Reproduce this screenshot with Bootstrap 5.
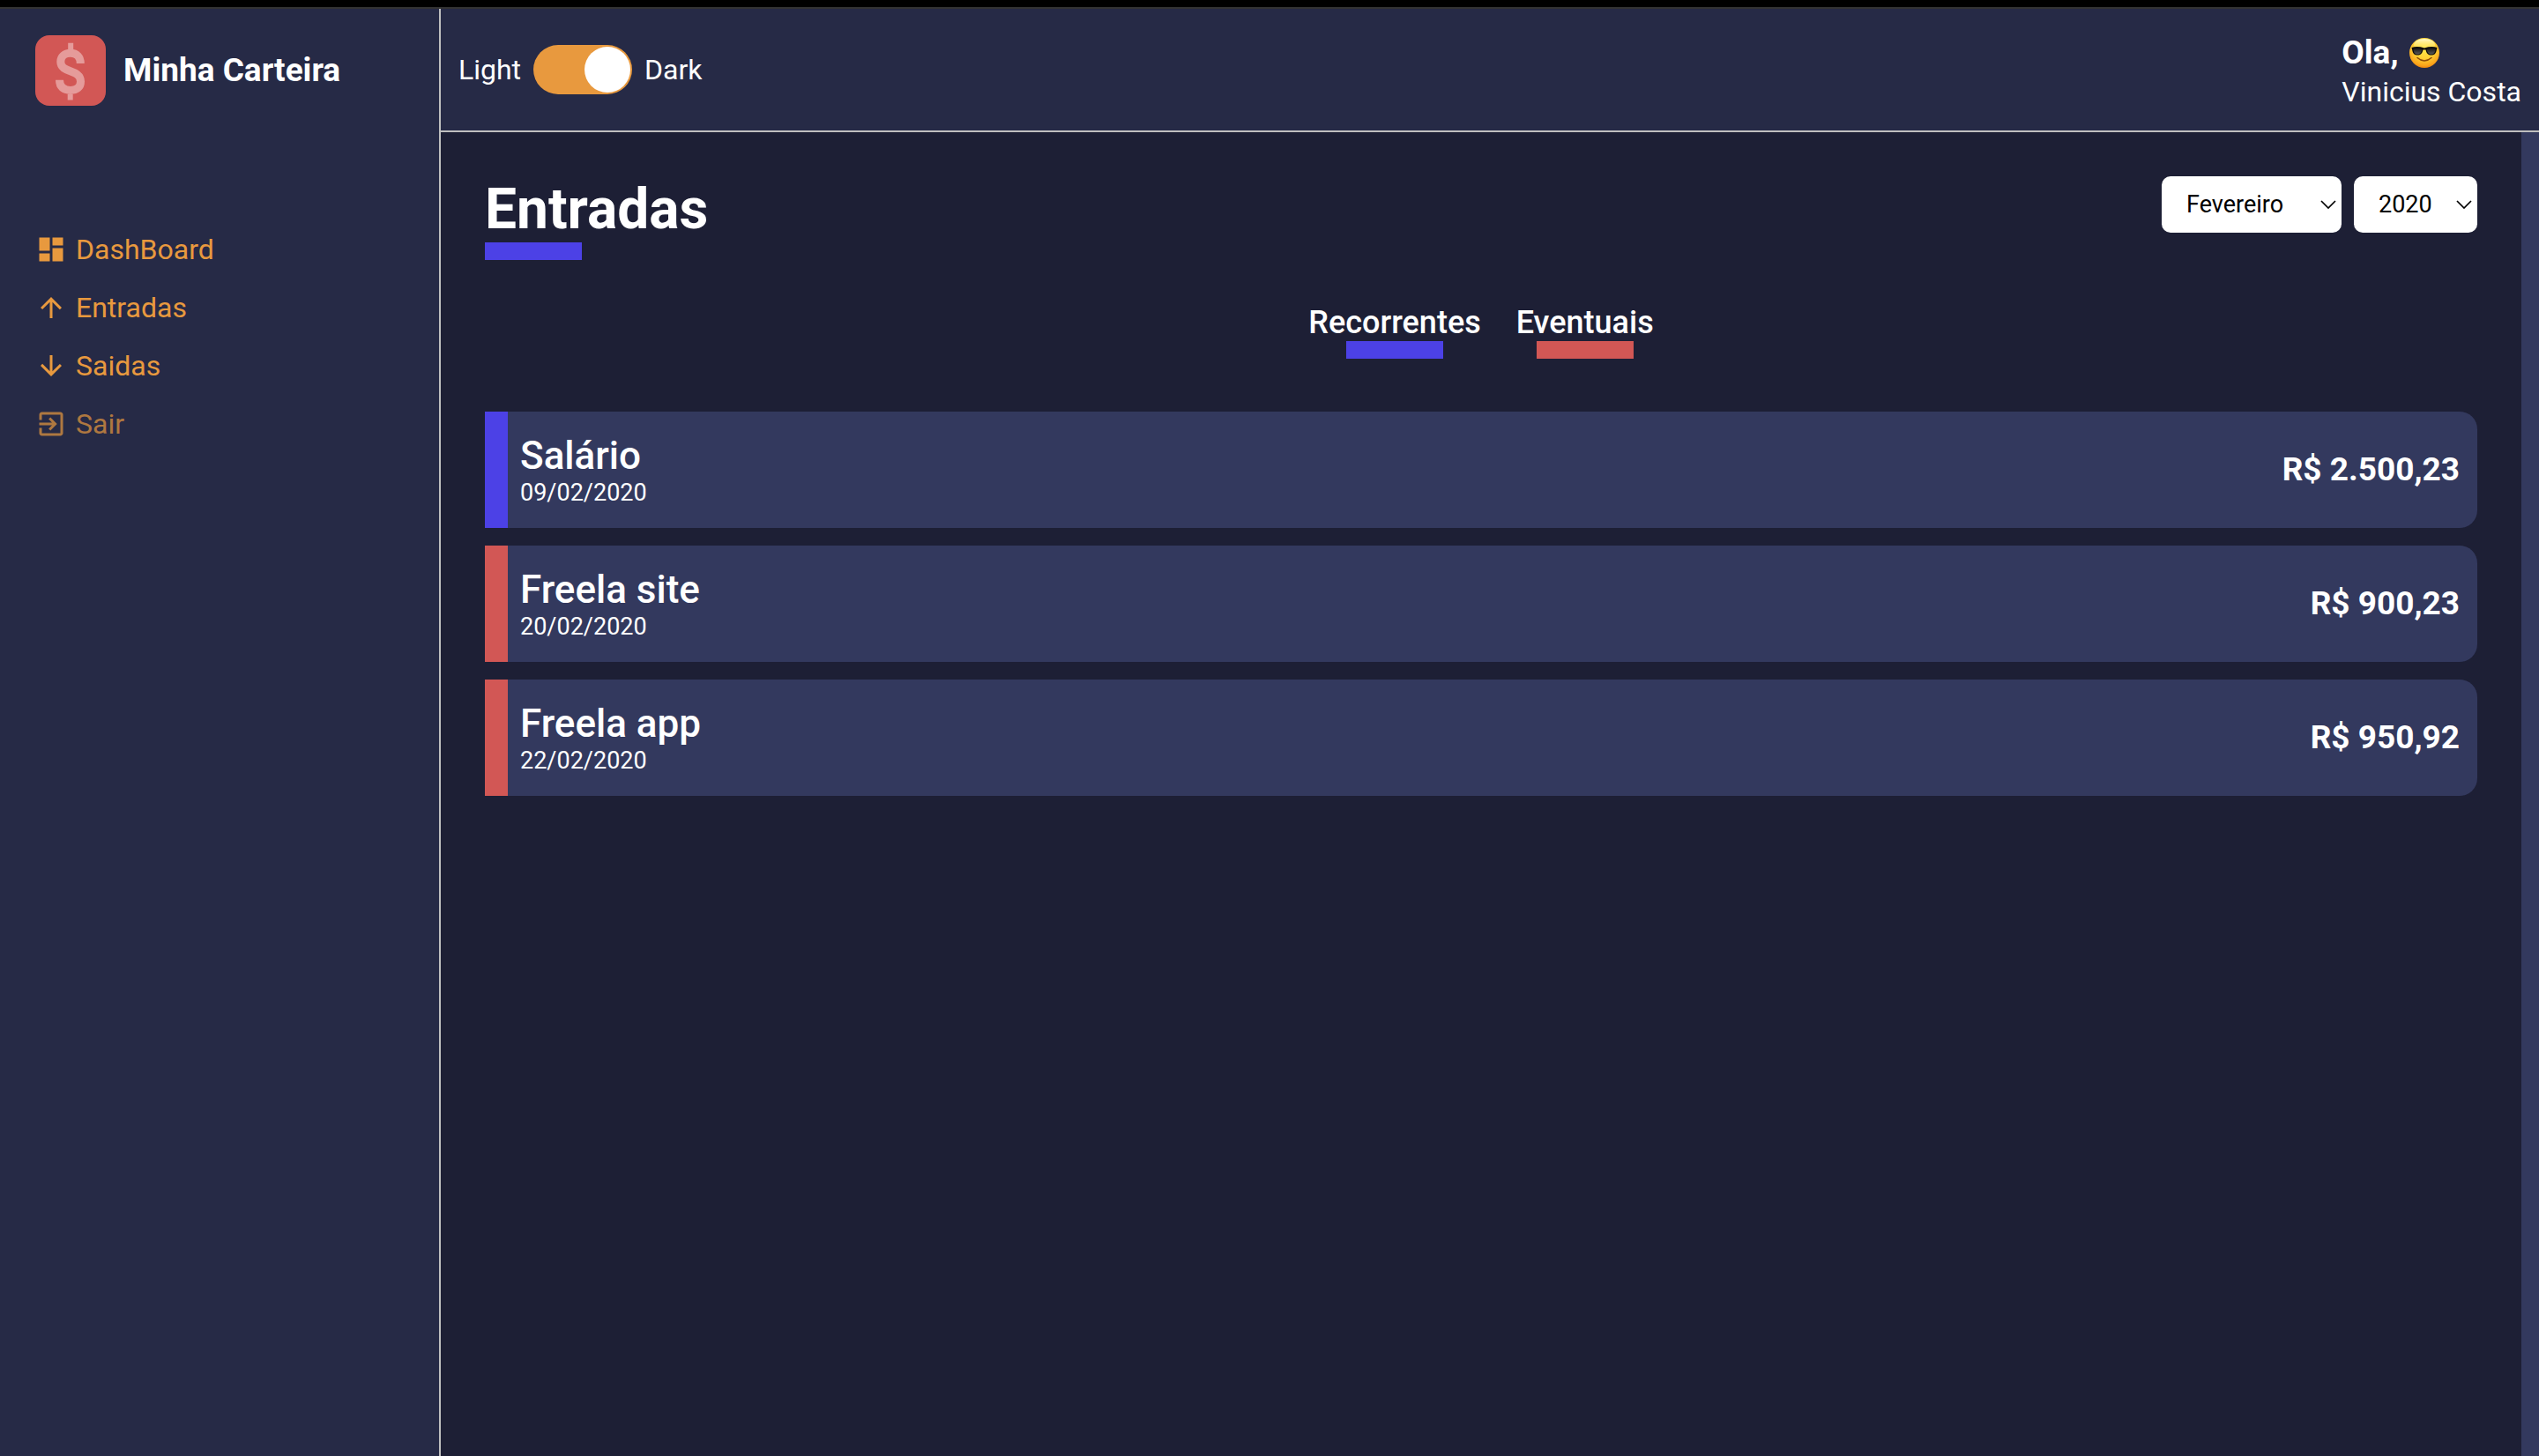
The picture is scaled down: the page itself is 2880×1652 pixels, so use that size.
<!DOCTYPE html>
<html lang="pt-BR">
<head>
<meta charset="utf-8">
<meta name="viewport" content="width=device-width, initial-scale=1">
<title>Minha Carteira</title>
<link href="https://cdn.jsdelivr.net/npm/bootstrap@5.3.0/dist/css/bootstrap.min.css" rel="stylesheet">
<style>
:root {
  --primary: #1d1f35;
  --secondary: #262a46;
  --tertiary: #33395e;
  --gray: #bfbfbf;
  --warning: #e8993e;
  --info: #4c41e6;
  --danger: #d25755;
}
body {
  font-family: Roboto, "Liberation Sans", sans-serif;
  font-size: 32px;
  line-height: 38px;
  color: #fff;
  background: var(--primary);
}
.window-edge { height: 10px; background: #000; border-bottom: 2px solid #333; }
.sidebar { width: 500px; background: var(--secondary); border-right: 2px solid var(--gray); padding-left: 40px; }
.brand { height: 140px; gap: 20px; margin-bottom: 114px; }
.brand svg { width: 80px; height: 80px; }
.brand-name { font-size: 37px; line-height: 44px; }
.side-menu { gap: 28px; }
.menu-link { display: flex; align-items: center; gap: 10px; color: var(--warning); text-decoration: none; }
.menu-link svg { width: 36px; height: 36px; fill: currentColor; }
.menu-link:hover, .menu-exit { opacity: .7; }
.topbar { height: 140px; padding: 0 20px; background: var(--secondary); border-bottom: 2px solid var(--gray); }
.theme-toggle { gap: 14px; }
.theme-switch {
  appearance: none; display: flex; width: 112px; height: 56px; margin: 0; padding: 2px;
  border-radius: 28px; background: var(--warning); cursor: pointer;
}
.theme-switch::before { content: ""; width: 52px; height: 52px; border-radius: 50%; background: #fff; }
.theme-switch:checked { justify-content: flex-end; }
.greeting { font-size: 37px; line-height: 50px; gap: 12px; }
.greeting svg { width: 34px; height: 34px; }
.content { padding: 50px; border-right: 20px solid var(--tertiary); }
.page-title { font-size: 64px; line-height: 75px; }
.underbar::after { content: ""; display: block; width: 110px; height: 20px; background: var(--bar); }
.bar-info { --bar: var(--info); }
.bar-danger { --bar: var(--danger); }
.selects { gap: 14px; }
.picker {
  appearance: none; height: 64px; padding: 0 28px; border: 0; border-radius: 10px;
  font-size: 27px; line-height: 32px; color: #000;
  background: #fff url("data:image/svg+xml,%3Csvg xmlns='http://www.w3.org/2000/svg' viewBox='0 0 18 10'%3E%3Cpath d='M1 1l8 8 8-8' fill='none' stroke='%23000' stroke-width='1.7'/%3E%3C/svg%3E") no-repeat right 6px center / 18px 10px;
}
.picker-month { width: 204px; }
.picker-year { width: 140px; }
.filters { gap: 40px; margin: 50px 0 60px; }
.filter-btn { display: flex; flex-direction: column; align-items: center; padding: 0; border: 0; background: none; color: #fff; font-size: 36px; font-weight: 500; line-height: 42px; }
.entries { gap: 20px; }
.entry { height: 132px; padding-right: 20px; background: var(--tertiary); border-radius: 0 20px 20px 0; }
.entry::before { content: ""; width: 26px; align-self: stretch; margin-right: 14px; background: var(--bar); }
.entry-name { font-size: 44px; font-weight: 500; line-height: 52px; }
.entry-date { font-size: 27px; line-height: 32px; }
.entry-value { font-size: 37px; line-height: 44px; }
</style>
</head>
<body>
<div class="d-flex flex-column min-vh-100">
  <div class="window-edge"></div>
  <div class="d-flex flex-grow-1">
    <aside class="sidebar flex-shrink-0">
      <div class="brand d-flex align-items-center">
        <svg viewBox="0 0 80 80" aria-hidden="true">
          <rect width="80" height="80" rx="16" fill="#d25755"/>
          <g fill="none" stroke="#e59b9a">
            <path stroke-width="9" d="M51.3 32C51.3 24.500 47 20.300 40 20.300C33 20.300 28.800 24.500 28.800 30C28.800 43.500 51.500 38 51.500 52.500C51.500 59 47 62.400 40 62.400C32 62.400 27.500 58.500 27.500 50.700"/>
            <path stroke-width="6" d="M40.200 8.700V16M39.700 66.800V73.500"/>
          </g>
        </svg>
        <h3 class="brand-name fw-bold m-0">Minha Carteira</h3>
      </div>
      <nav class="side-menu d-flex flex-column">
        <a class="menu-link" href="#"><svg viewBox="0 0 24 24"><path d="M3 13h8V3H3v10zm0 8h8v-6H3v6zm10 0h8V11h-8v10zm0-18v6h8V3h-8z"/></svg>DashBoard</a>
        <a class="menu-link" href="#"><svg viewBox="0 0 24 24"><path d="M4 12l1.410 1.410L11 7.830V20h2V7.830l5.580 5.590L20 12l-8-8z"/></svg>Entradas</a>
        <a class="menu-link" href="#"><svg viewBox="0 0 24 24"><path d="M20 12l-1.410-1.410L13 16.170V4h-2v12.170l-5.580-5.590L4 12l8 8z"/></svg>Saidas</a>
        <a class="menu-link menu-exit" href="#"><svg viewBox="0 0 24 24"><path d="M10.090 15.590L11.500 17l5-5-5-5-1.410 1.410L12.670 11H3v2h9.670l-2.580 2.590zM19 3H5c-1.110 0-2 .9-2 2v4h2V5h14v14H5v-4H3v4c0 1.100.89 2 2 2h14c1.100 0 2-.9 2-2V5c0-1.100-.9-2-2-2z"/></svg>Sair</a>
      </nav>
    </aside>
    <div class="d-flex flex-column flex-grow-1">
      <header class="topbar d-flex align-items-center justify-content-between">
        <div class="theme-toggle d-flex align-items-center">
          <label for="theme">Light</label>
          <input class="theme-switch" type="checkbox" role="switch" id="theme" checked>
          <label for="theme">Dark</label>
        </div>
        <div>
          <h3 class="greeting d-flex align-items-center fw-bold m-0">Ola,
            <svg viewBox="0 0 34 34" role="img" aria-label="😎">
              <defs>
                <radialGradient id="face" cx=".5" cy=".32" r=".7">
                  <stop offset="0" stop-color="#ffe94f"/><stop offset=".5" stop-color="#ffd336"/><stop offset=".85" stop-color="#fca51b"/><stop offset="1" stop-color="#e87f0c"/>
                </radialGradient>
                <linearGradient id="shine" x2="0" y2="1"><stop offset="0" stop-color="#fffbd0"/><stop offset="1" stop-color="#ffe94f" stop-opacity="0"/></linearGradient>
                <linearGradient id="lens" x2="0" y2="1"><stop offset="0" stop-color="#151515"/><stop offset="1" stop-color="#5a5a5a"/></linearGradient>
              </defs>
              <circle cx="17" cy="17" r="17" fill="url(#face)"/>
              <ellipse cx="17" cy="8" rx="12" ry="7" fill="url(#shine)"/>
              <path d="M9 22.500Q17 29.500 25 22.500" fill="none" stroke="#8a4a08" stroke-width="1.500" stroke-linecap="round"/>
              <path d="M2.500 11Q9 9 17 11.500Q25 9 31.500 11L31 13C30 18 28.500 19.500 24.500 19.500C20.500 19.500 19.500 17 18.500 13.500H15.500C14.500 17 13.500 19.500 9.500 19.500C5.500 19.500 4 18 3 13Z" fill="#0c0c0c"/>
              <path d="M4.500 12.500Q10 11 14.300 13C13.500 17 12 18.500 9.500 18.500C6 18.500 5 17 4.500 12.500ZM29.500 12.500Q24 11 19.700 13C20.500 17 22 18.500 24.500 18.500C28 18.500 29 17 29.500 12.500Z" fill="url(#lens)"/>
            </svg>
          </h3>
          <p class="m-0">Vinicius Costa</p>
        </div>
      </header>
      <main class="content flex-grow-1">
        <div class="d-flex justify-content-between align-items-start">
          <h1 class="page-title underbar bar-info fw-bold m-0">Entradas</h1>
          <div class="selects d-flex">
            <select class="picker picker-month" aria-label="Mês"><option>Fevereiro</option></select>
            <select class="picker picker-year" aria-label="Ano"><option>2020</option></select>
          </div>
        </div>
        <div class="filters d-flex justify-content-center">
          <button type="button" class="filter-btn underbar bar-info">Recorrentes</button>
          <button type="button" class="filter-btn underbar bar-danger">Eventuais</button>
        </div>
        <ul class="entries list-unstyled d-flex flex-column m-0">
          <li class="entry bar-info d-flex align-items-center">
            <div class="flex-grow-1"><div class="entry-name">Salário</div><div class="entry-date">09/02/2020</div></div>
            <strong class="entry-value">R$ 2.500,23</strong>
          </li>
          <li class="entry bar-danger d-flex align-items-center">
            <div class="flex-grow-1"><div class="entry-name">Freela site</div><div class="entry-date">20/02/2020</div></div>
            <strong class="entry-value">R$ 900,23</strong>
          </li>
          <li class="entry bar-danger d-flex align-items-center">
            <div class="flex-grow-1"><div class="entry-name">Freela app</div><div class="entry-date">22/02/2020</div></div>
            <strong class="entry-value">R$ 950,92</strong>
          </li>
        </ul>
      </main>
    </div>
  </div>
</div>
<script src="https://cdn.jsdelivr.net/npm/bootstrap@5.3.0/dist/js/bootstrap.bundle.min.js"></script>
</body>
</html>
